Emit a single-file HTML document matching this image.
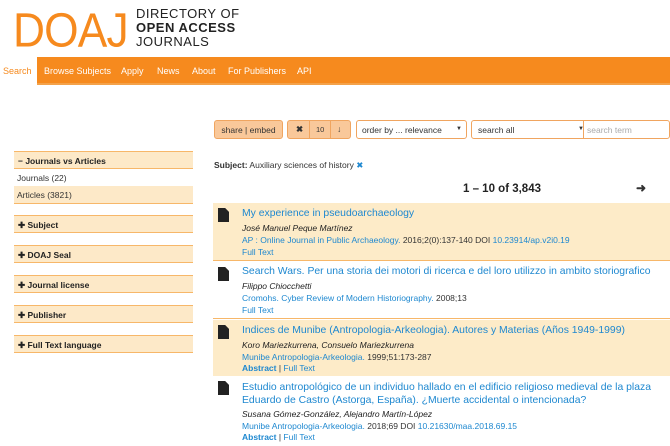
<!DOCTYPE html>
<html><head><meta charset="utf-8"><style>
*{margin:0;padding:0;box-sizing:border-box}
body{width:670px;height:446px;overflow:hidden;background:#fff;font-family:"Liberation Sans",Arial,sans-serif;font-size:9px;color:#333;position:relative}
.a{position:absolute}
.logo{left:13px;top:6px;font-size:54px;color:#f68a1e;letter-spacing:-1px;line-height:54px;transform:scale(0.82,0.9);transform-origin:top left}
.tag{left:136px;top:7px;font-size:13px;line-height:14px;color:#222;letter-spacing:.5px}
.nav{left:0;top:57px;width:670px;height:28px;background:#f68a1e;border-bottom:2px solid #f4a24a}
.nav span{position:absolute;top:9px;color:#fff;font-size:9px}
.side{left:14px;width:179px;height:18px;background:#fde9c8;border-top:1px solid #f7b769;border-bottom:1px solid #f7b769;font-weight:bold;font-size:8.5px;padding:4px 4px;color:#222}
.row{left:14px;width:179px;height:18px;font-size:8.5px;padding:4px 3px;border-bottom:1px solid #f7b769}
.btn{top:120px;height:19px;border:1px solid #f0a560;border-radius:3px;font-size:8.5px;color:#333;padding-top:4px}
.item{left:213px;width:457px}
.ic{position:absolute;left:5px;top:5px;width:11px;height:14px;background:#222;clip-path:polygon(0 0,65% 0,100% 28%,100% 100%,0 100%)}
.t{position:absolute;left:29px;color:#1e88d0;font-size:10.4px;white-space:nowrap}
.au{position:absolute;left:29px;font-style:italic;font-size:8.5px;color:#222;white-space:nowrap}
.j{position:absolute;left:29px;font-size:8.5px;color:#333;white-space:nowrap}
.j b,.lk{color:#1e88d0;font-weight:normal}
</style></head><body>
<div class="a logo">DOAJ</div>
<div class="a tag">DIRECTORY OF<br><b>OPEN ACCESS</b><br>JOURNALS</div>
<div class="a nav">
<div class="a" style="left:0;top:0;width:37px;height:28px;background:#fff"></div>
<span style="left:3px;color:#f68a1e">Search</span>
<span style="left:44px">Browse Subjects</span><span style="left:121px">Apply</span><span style="left:157px">News</span><span style="left:192px">About</span><span style="left:228px">For Publishers</span><span style="left:297px">API</span>
</div>

<div class="a btn" style="left:214px;width:69px;background:#f9c89a;text-align:center">share | embed</div>
<div class="a btn" style="left:287px;width:64px;background:#f9c89a">
<span class="a" style="left:8px;top:3px;font-weight:bold">✖</span><span class="a" style="left:21px;top:0;width:1px;height:17px;background:#f0a560"></span><span class="a" style="left:28px;top:4px;font-size:7.5px">10</span><span class="a" style="left:42px;top:0;width:1px;height:17px;background:#f0a560"></span><span class="a" style="left:49px;top:3px;font-weight:bold">↓</span></div>
<div class="a btn" style="left:356px;width:111px;background:#fff;padding-left:5px">order by ... relevance<span class="a" style="right:4px;top:5px;font-size:6px">▼</span></div>
<div class="a btn" style="left:471px;width:199px;background:#fff;padding-left:6px">search all<span class="a" style="left:106px;top:5px;font-size:6px">▼</span><span class="a" style="left:111px;top:0;width:1px;height:17px;background:#f0a560"></span><span class="a" style="left:115px;top:4px;color:#aaa">search term</span></div>

<div class="a" style="left:214px;top:160px;font-size:8.5px"><b>Subject:</b> Auxiliary sciences of history <span style="color:#1e88d0">✖</span></div>
<div class="a" style="left:463px;top:183px;font-size:11.5px;font-weight:bold;color:#222">1 – 10 of 3,843</div>
<div class="a" style="left:636px;top:181px;font-size:12px;font-weight:bold">➜</div>

<div class="a side" style="top:151px">− Journals vs Articles</div>
<div class="a row" style="top:169px">Journals (22)</div>
<div class="a row" style="top:186px;background:#fde9c8">Articles (3821)</div>
<div class="a side" style="top:215px">✚ Subject</div>
<div class="a side" style="top:245px">✚ DOAJ Seal</div>
<div class="a side" style="top:275px">✚ Journal license</div>
<div class="a side" style="top:305px">✚ Publisher</div>
<div class="a side" style="top:335px">✚ Full Text language</div>

<div class="a item" style="top:203px;height:58px;background:#fdebc8;border-bottom:1px solid #f7b769"><div class="ic"></div>
<div class="t" style="top:5px">My experience in pseudoarchaeology</div>
<div class="au" style="top:20px">José Manuel Peque Martínez</div>
<div class="j" style="top:32px"><b>AP : Online Journal in Public Archaeology.</b> 2016;2(0):137-140 DOI <b>10.23914/ap.v2i0.19</b></div>
<div class="j lk" style="top:44px">Full Text</div></div>

<div class="a item" style="top:262px;height:57px;border-bottom:1px solid #f7b769"><div class="ic"></div>
<div class="t" style="top:4px">Search Wars. Per una storia dei motori di ricerca e del loro utilizzo in ambito storiografico</div>
<div class="au" style="top:19px">Filippo Chiocchetti</div>
<div class="j" style="top:31px"><b>Cromohs. Cyber Review of Modern Historiography.</b> 2008;13</div>
<div class="j lk" style="top:43px">Full Text</div></div>

<div class="a item" style="top:320px;height:56px;background:#fdebc8"><div class="ic"></div>
<div class="t" style="top:5px">Indices de Munibe (Antropologia-Arkeologia). Autores y Materias (Años 1949-1999)</div>
<div class="au" style="top:20px">Koro Mariezkurrena, Consuelo Mariezkurrena</div>
<div class="j" style="top:32px"><b>Munibe Antropologia-Arkeologia.</b> 1999;51:173-287</div>
<div class="j" style="top:43px"><b style="font-weight:bold">Abstract</b> | <span class="lk">Full Text</span></div></div>

<div class="a item" style="top:376px;height:70px"><div class="ic"></div>
<div class="t" style="top:5px;line-height:13px">Estudio antropológico de un individuo hallado en el edificio religioso medieval de la plaza<br>Eduardo de Castro (Astorga, España). ¿Muerte accidental o intencionada?</div>
<div class="au" style="top:33px">Susana Gómez-González, Alejandro Martín-López</div>
<div class="j" style="top:45px"><b>Munibe Antropologia-Arkeologia.</b> 2018;69 DOI <b>10.21630/maa.2018.69.15</b></div>
<div class="j" style="top:56px"><b style="font-weight:bold">Abstract</b> | <span class="lk">Full Text</span></div></div>
</body></html>
